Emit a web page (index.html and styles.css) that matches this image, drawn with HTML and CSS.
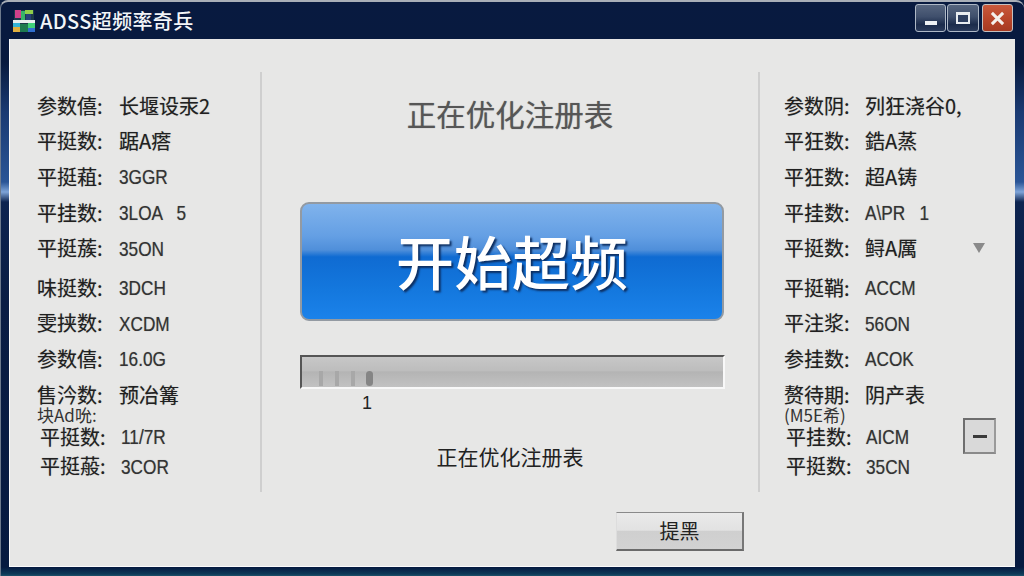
FILE: index.html
```html
<!DOCTYPE html>
<html lang="zh-CN">
<head>
<meta charset="utf-8">
<title>ADSS超频率奇兵</title>
<link rel="stylesheet" href="styles.css">
</head>
<body>
<div class="window">
  <header class="titlebar">
    <svg class="app-icon" viewBox="0 0 22 22" aria-hidden="true">
      <rect x="1" y="0" width="20" height="22" fill="#1c3a4a"/>
      <rect x="2" y="0" width="6" height="8" fill="#d0408a"/>
      <rect x="8" y="1" width="4" height="9" fill="#37b36a"/>
      <rect x="12" y="0" width="8" height="4" fill="#8fcf4a"/>
      <rect x="13" y="4" width="5" height="6" fill="#27407a"/>
      <rect x="0" y="10" width="22" height="3" fill="#e8eef0"/>
      <rect x="0" y="13" width="7" height="4" fill="#34b4d8"/>
      <rect x="0" y="17" width="7" height="5" fill="#e0b040"/>
      <rect x="7" y="14" width="8" height="8" fill="#1c7a50"/>
      <rect x="15" y="13" width="7" height="5" fill="#3fd07a"/>
      <rect x="15" y="18" width="7" height="4" fill="#2f6fd0"/>
    </svg>
    <span class="app-title">ADSS超频率奇兵</span>
    <div class="controls">
      <div class="ctl ctl-min"><span class="glyph-min"></span></div>
      <div class="ctl ctl-max"><span class="glyph-max"></span></div>
      <div class="ctl ctl-close">
        <svg class="glyph-close" viewBox="0 0 16 16" aria-hidden="true"><path d="M2 2 14 14M14 2 2 14" stroke="#f4f0ec" stroke-width="3.2" fill="none"/></svg>
      </div>
    </div>
  </header>

  <main class="panel">
    <div class="columns">
      <section class="col col-left">
        <div class="row"><span class="label">参数僖:</span><span class="value">长堰设汞2</span></div>
        <div class="row"><span class="label">平挺数:</span><span class="value">踞A瘩</span></div>
        <div class="row"><span class="label">平挺蒩:</span><span class="value latin">3GGR</span></div>
        <div class="row"><span class="label">平挂数:</span><span class="value latin pre">3LOA   5</span></div>
        <div class="row"><span class="label">平挺蔟:</span><span class="value latin">35ON</span></div>
        <div class="row row-gap"><span class="label">味挺数:</span><span class="value latin">3DCH</span></div>
        <div class="row"><span class="label">雯挟数:</span><span class="value latin">XCDM</span></div>
        <div class="row"><span class="label">参数僖:</span><span class="value latin">16.0G</span></div>
        <div class="row"><span class="label">售汵数:</span><span class="value">预冶篝</span></div>
        <div class="row-small">块Ad吮:</div>
        <div class="row row-in"><span class="label">平挺数:</span><span class="value latin">11/7R</span></div>
        <div class="row row-in row-last"><span class="label">平挺蒰:</span><span class="value latin">3COR</span></div>
      </section>

      <section class="col-center">
        <h1 class="heading">正在优化注册表</h1>
        <button class="start" type="button">开始超频</button>
        <div class="progress">
          <span class="tick"></span><span class="tick"></span><span class="tick"></span><span class="pill"></span>
        </div>
        <div class="progress-num">1</div>
        <p class="status">正在优化注册表</p>
      </section>

      <section class="col col-right">
        <div class="row"><span class="label">参数阴:</span><span class="value">列狂浇谷0,</span></div>
        <div class="row"><span class="label">平狂数:</span><span class="value">鋯A蒸</span></div>
        <div class="row"><span class="label">平狂数:</span><span class="value">超A铸</span></div>
        <div class="row"><span class="label">平挂数:</span><span class="value latin pre">A\PR   1</span></div>
        <div class="row"><span class="label">平挺数:</span><span class="value">鲟A厲</span><span class="arrow"></span></div>
        <div class="row row-gap"><span class="label">平挺鞘:</span><span class="value latin">ACCM</span></div>
        <div class="row"><span class="label">平注浆:</span><span class="value latin">56ON</span></div>
        <div class="row"><span class="label">参挂数:</span><span class="value latin">ACOK</span></div>
        <div class="row"><span class="label">赘待期:</span><span class="value">阴产表</span></div>
        <div class="row-small">(M5E希)</div>
        <div class="row row-in"><span class="label">平挂数:</span><span class="value latin">AICM</span><span class="minus"><span class="minus-bar"></span></span></div>
        <div class="row row-in row-last"><span class="label">平挺数:</span><span class="value latin">35CN</span></div>
      </section>
    </div>
    <footer class="footer"><button class="action" type="button">提黑</button></footer>
  </main>
</div>
</body>
</html>
```
FILE: styles.css
```css
* { box-sizing: border-box; }
html, body { margin: 0; height: 100%; }
body {
  width: 1024px;
  height: 576px;
  overflow: hidden;
  background: #0a1d40;
  font-family: "Noto Sans CJK SC", "Liberation Sans", sans-serif;
}
.window {
  width: 1024px;
  height: 576px;
  padding: 0 9px 9px 8px;
  border-top: 2px solid #a9afb8;
  border-left: 1px solid #6d7a8c;
  border-radius: 8px 8px 0 0;
  background: linear-gradient(180deg, #081a40 0, #081a3e 60px, #1a3a72 110px, #2a5596 180px, #7ea4d8 190px, #0d2450 200px, #0a1d44 300px, #061a40 565px, #0d3a58 572px, #2c6a7c 576px);
  display: flex;
  flex-direction: column;
}
.titlebar {
  height: 37px;
  flex: none;
  display: flex;
  align-items: center;
  margin-right: 2px;
}
.app-icon { width: 22px; height: 22px; margin-left: 4px; flex: none; }
.app-title {
  margin-left: 5px;
  font-size: 20px;
  font-weight: 500;
  letter-spacing: 0.35px;
  color: #f2f5f8;
}
.controls { margin-left: auto; display: flex; gap: 1px; margin-top: -5px; }
.ctl {
  width: 32px;
  height: 28px;
  border: 1px solid #aeb8c6;
  border-radius: 3px;
  display: flex;
  align-items: center;
  justify-content: center;
  background: linear-gradient(180deg, #56657f 0, #3f4f6c 45%, #1c2c4c 75%, #2a3a5a 100%);
}
.ctl-min { width: 31px; }
.ctl-close {
  width: 31px;
  margin-left: 2px;
  background: linear-gradient(180deg, #c8593c 0, #b8452a 55%, #a63a22 100%);
  border-color: #c4c0c0;
}
.glyph-min { width: 12px; height: 4px; background: #eef1f4; margin-top: 9px; }
.glyph-max { width: 14px; height: 12px; border: 2px solid #e8ecf0; border-top-width: 3px; background: #2e3f60; }
.glyph-close { width: 15px; height: 15px; }

.panel {
  flex: 1;
  min-height: 0;
  background: #e7e7e6;
  border-left: 1px solid #fbfbfb;
  border-bottom: 1px solid #fbfbfb;
  padding-top: 33px;
  display: flex;
  flex-direction: column;
  color: #202020;
}
.columns { display: flex; height: 420px; flex: none; }
.col { padding-top: 16px; flex: none; }
.col-left { width: 252px; padding-left: 27px; border-right: 2px solid #cfcfcf; }
.col-right { flex: 1; min-width: 0; padding-left: 24px; border-left: 2px solid #cfcfcf; }
.row {
  height: 35.6px;
  display: flex;
  align-items: center;
  font-size: 20px;
  line-height: 1;
  white-space: nowrap;
  text-shadow: 0 0 1px rgba(0, 0, 0, 0.35);
}
.row-gap { margin-top: 4px; }
.row-in { padding-left: 2px; }
.row-last { height: 24px; }
.row-small {
  height: 6.4px;
  font-size: 17px;
  line-height: 6.4px;
  color: #333;
  white-space: nowrap;
}
.label { width: 81px; flex: none; }
.col-left .label { width: 82px; }
.col-left .row-in { padding-left: 3px; }
.col-left .row-in .label { width: 81px; }
.col-right .row-in .label { width: 80px; }
.latin {
  display: inline-block;
  width: 60px;
  flex: none;
  font-family: "Liberation Sans", sans-serif;
  font-size: 21px;
  color: #333;
  transform: scaleX(0.82);
  transform-origin: left center;
}
.pre { white-space: pre; width: 70px; }
.arrow {
  width: 0;
  height: 0;
  margin-left: 56px;
  border-left: 6px solid transparent;
  border-right: 6px solid transparent;
  border-top: 10px solid #8a8a8a;
}
.minus {
  width: 33px;
  height: 36px;
  margin-left: 37px;
  border: 2px solid #6e6e6e;
  border-right-color: #9a9a9a;
  border-bottom-color: #8a8a8a;
  background: #d9d9d9;
  display: flex;
  align-items: center;
  justify-content: center;
  margin-top: -1px;
}
.minus-bar { width: 14px; height: 3px; background: #3a3a3a; }

.col-center {
  width: 496px;
  flex: none;
  padding: 21px 0 0 38px;
  display: flex;
  flex-direction: column;
  align-items: flex-start;
}
.heading {
  margin: 0;
  width: 420px;
  text-align: center;
  font-size: 29.5px;
  font-weight: 400;
  line-height: 40px;
  color: #565656;
  text-shadow: 0 0 1px rgba(0, 0, 0, 0.4);
}
.start {
  margin-top: 69px;
  width: 424px;
  height: 119px;
  padding: 0 0 4px;
  border: 2px solid #939aa2;
  border-radius: 9px;
  background: linear-gradient(180deg, #80b3ec 0, #649fe4 28%, #4f8fda 40%, #0f6bd2 46%, #1478de 75%, #1b82ea 100%);
  color: #fff;
  font-family: inherit;
  font-size: 58px;
  font-weight: 500;
  line-height: 1;
  text-shadow: 2px 2px 2px #0d2f62;
}
.progress {
  margin-top: 34px;
  width: 425px;
  height: 34px;
  border-style: solid;
  border-width: 2px;
  border-color: #555 #f8f8f8 #f8f8f8 #555;
  background: linear-gradient(180deg, #c7c7c7 0, #bdbdbd 45%, #b4b4b4 50%, #c2c2c2 100%);
  display: flex;
  align-items: flex-end;
  gap: 12px;
  padding: 0 0 1px 17px;
}
.tick { width: 4px; height: 15px; background: #a8a8a8; flex: none; }
.pill { width: 7px; height: 15px; margin-left: -1px; border-radius: 4px; background: #858585; flex: none; }
.progress-num {
  margin-left: 62px;
  margin-top: 4px;
  font-family: "Liberation Sans", sans-serif;
  font-size: 18px;
  line-height: 20px;
  color: #222;
}
.status {
  margin: 28px 0 0;
  width: 420px;
  text-align: center;
  font-size: 21px;
  line-height: 30px;
  color: #222;
}
.footer { display: flex; justify-content: flex-end; padding: 20px 271px 0 0; }
.action {
  width: 128px;
  height: 39px;
  padding: 0;
  border-style: solid;
  border-width: 1px 2px 2px 1px;
  border-color: #8a8a8a #777 #6a6a6a #ddd;
  background: linear-gradient(180deg, #eaeaea 0, #e2e2e2 48%, #cfcfcf 50%, #d2d2d2 100%);
  font-family: inherit;
  font-size: 20px;
  line-height: 1;
  color: #222;
}
```
